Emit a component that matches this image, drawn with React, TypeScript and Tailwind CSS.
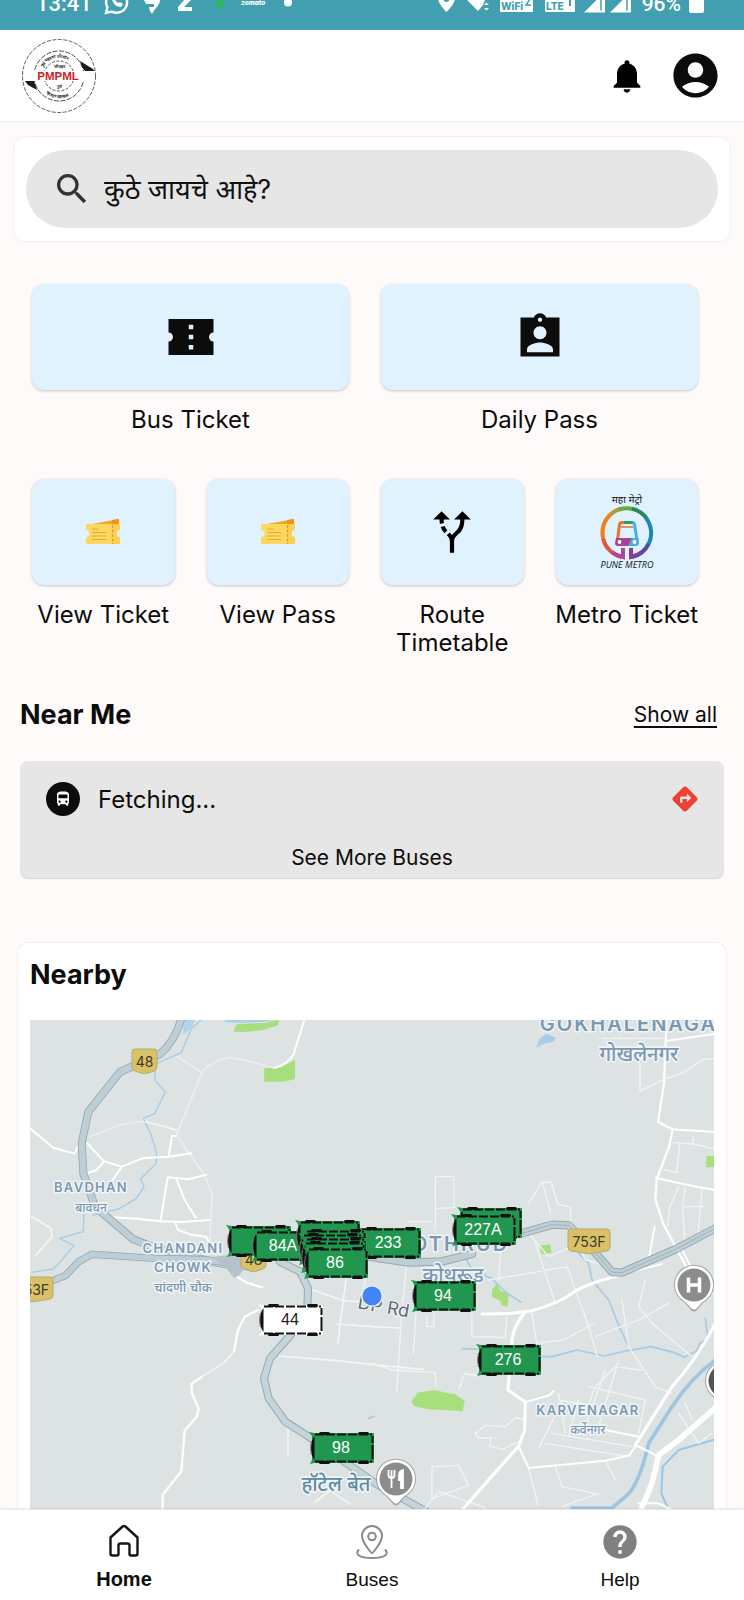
import type { ReactNode } from "react";
import {
  MdAccountCircle,
  MdAltRoute,
  MdDirections,
  MdDirectionsBus,
  MdHelp,
  MdNotifications,
  MdSearch,
} from "react-icons/md";

const MAP_FONT = "Inter, 'Noto Sans', 'Noto Sans Devanagari', sans-serif";

function StatusBar() {
  return (
    <div className="flex h-[30px] items-end justify-between overflow-hidden bg-[#419fb0] pr-[40px] pl-[36px] text-white">
      <div className="flex items-end gap-4">
        <span className="mb-[15px] w-[52px] font-['Roboto',sans-serif] text-[22px] leading-[22px] font-medium">13:41</span>
        <svg viewBox="0 0 190 30" className="h-[30px] w-[190px]" aria-hidden="true">
          <g fill="none" stroke="#fff" strokeWidth="2.4">
            <path d="M2 13 L3.4 7.2 A10.5 10.5 0 1 1 8 11.6 Z" />
          </g>
          <path d="M8 -2c0 5 4 9 9 9l2-3-3-2-2 1-3-3 1-2z" fill="#fff" />
          <path d="M40 0h16c0 5-4 7-8 14-2-3-3-5-3-7h5V4h-8z" fill="#fff" />
          <path d="M75 -4h12v4l-7 7h8v4H74V7l7-8h-6z" fill="#fff" />
          <rect x="112" y="-4" width="8" height="12" rx="1" fill="#2fb56a" />
          <text x="137" y="5" fill="#fff" fontSize="6.5" fontWeight="800" fontStyle="italic" fontFamily="Inter, sans-serif">zomato</text>
          <circle cx="184" cy="2.500" r="4" fill="#fff" />
        </svg>
      </div>
      <div className="flex items-end gap-2">
        <svg viewBox="0 0 198 30" className="h-[30px] w-[198px]" aria-hidden="true">
          <path d="M2 -2a8.500 8.500 0 0 1 17 0c0 6-8.500 14-8.500 14S2 4 2 -2z" fill="#fff" />
          <circle cx="10.500" cy="-1" r="3" fill="#419fb0" />
          <path d="M31 0h18l-2 5-5 6z" fill="#fff" />
          <path d="M48 5l2.500-2.500L53 5zM48 8l2.500 2.500L53 8z" fill="#fff" />
          <rect x="64" y="-6" width="33" height="18" rx="1" fill="#fff" />
          <text x="65" y="10" fill="#419fb0" fontSize="10" fontWeight="800" fontFamily="Inter, sans-serif">WiFi</text>
          <path d="M90 -1h4l-4 6h5" fill="none" stroke="#419fb0" strokeWidth="1.500" />
          <rect x="109" y="-6" width="30" height="18" rx="1" fill="#fff" />
          <text x="110" y="10" fill="#419fb0" fontSize="10" fontWeight="800" fontFamily="Inter, sans-serif">LTE</text>
          <path d="M134 -1v7" stroke="#419fb0" strokeWidth="2" />
          <path d="M148 12.500l21-21v21zM174 12.500l21-21v21z" fill="#fff" />
          <path d="M165 0v10.500M191 0v10.500" stroke="#419fb0" strokeWidth="1.500" />
        </svg>
        <span className="mb-[15px] font-['Roboto',sans-serif] text-[21px] leading-[22px] font-medium">96%</span>
        <svg viewBox="0 0 15 30" className="h-[30px] w-[15px]" aria-hidden="true">
          <rect y="-8" width="15" height="21" rx="2" fill="#fff" />
        </svg>
      </div>
    </div>
  );
}

function Logo() {
  return (
    <svg viewBox="0 0 76 76" className="size-[76px]" role="img" aria-label="PMPML">
      <defs>
        <path id="seal-top" d="M19.500 38a18.500 18.500 0 0 1 37 0" />
        <path id="seal-bottom" d="M16 38a22 22 0 0 0 44 0" />
      </defs>
      <g fill="none" stroke="#333">
        <circle cx="38" cy="38" r="36.500" strokeWidth=".8" strokeDasharray="4 1.500" />
        <circle cx="38" cy="38" r="25" strokeWidth=".9" strokeDasharray="5 1.500" />
        <circle cx="38" cy="38" r="15" strokeWidth=".8" strokeDasharray="3 1.500" />
      </g>
      <g fill="#222" fontFamily="Inter, sans-serif" fontSize="4" fontWeight="600">
        <text><textPath href="#seal-top" startOffset="9">पुणे महानगर परिवहन</textPath></text>
        <text><textPath href="#seal-bottom" startOffset="20">परिवहन महामंडळ</textPath></text>
        <text x="38" y="30" textAnchor="middle">परिवहन</text>
        <text x="38" y="50" textAnchor="middle">पुणे</text>
      </g>
      <rect x="3" y="33" width="71" height="10" fill="#fff" />
      <path d="M59 23l13 8 1.500 2H64l-3-4zM4 43h9l3 9-9-5z" fill="#1b1b1b" />
      <text x="37" y="42" textAnchor="middle" fill="#cf1f2c" fontSize="11.500" fontWeight="700" fontFamily="'Liberation Sans', sans-serif" textRendering="geometricPrecision">PMPML</text>
    </svg>
  );
}

function TicketSharp() {
  return (
    <svg viewBox="0 0 24 24" className="size-[54px]" fill="#0c0c0c" aria-hidden="true">
      <path d="M22 10V4H2v6c1.100 0 2 .9 2 2s-.9 2-2 2v6h20v-6c-1.100 0-2-.9-2-2s.9-2 2-2zm-9 7.500h-2v-2h2zm0-4.500h-2v-2h2zm0-4.500h-2v-2h2z" />
    </svg>
  );
}

function PassSharp() {
  return (
    <svg viewBox="0 0 24 24" className="size-[52px]" fill="#0c0c0c" aria-hidden="true">
      <path d="M21 3h-6.180C14.400 1.840 13.300 1 12 1s-2.400.84-2.820 2H3v18h18V3zm-9 0c.55 0 1 .45 1 1s-.45 1-1 1-1-.45-1-1 .45-1 1-1zm0 4c1.660 0 3 1.340 3 3s-1.340 3-3 3-3-1.340-3-3 1.340-3 3-3zm6 12H6v-1.400c0-2 4-3.100 6-3.100s6 1.100 6 3.100V19z" />
    </svg>
  );
}

function YellowTicket() {
  return (
    <svg viewBox="0 0 36 26" className="h-[26px] w-[36px]" aria-hidden="true">
      <path d="M2 6L34 0v6z" fill="#f5a623" />
      <path d="M27 1l7-1v5h-7z" fill="#eb9420" />
      <path d="M1 5h34v6a3.500 3.500 0 0 0 0 7v7H1v-7a3.500 3.500 0 0 0 0-7z" fill="#fdd85d" />
      <path d="M28 5h7v6a3.500 3.500 0 0 0 0 7v7h-7z" fill="#fccf50" />
      <path d="M27.500 6v19" stroke="#d79a35" strokeWidth="1.200" strokeDasharray="3 1.500" />
      <path d="M7 10h7M7 13.500h14M7 17h14M7 20.500h14" stroke="#e0ab45" strokeWidth="1.200" />
    </svg>
  );
}

function MetroLogo() {
  return (
    <svg viewBox="0 0 60 78" className="h-[78px] w-[60px]" role="img" aria-label="Pune Metro">
      <text x="30" y="10" textAnchor="middle" fontSize="10" fontStyle="italic" fontFamily={MAP_FONT} fill="#111">महा मेट्रो</text>
      <g fill="none" strokeWidth="4">
        <path d="M25 64A24.500 24.500 0 0 1 6 45" stroke="#e0573e" />
        <path d="M6 45A24.500 24.500 0 0 1 14 21" stroke="#f0811f" />
        <path d="M14 21A24.500 24.500 0 0 1 23 16" stroke="#b8963a" />
        <path d="M22 16.500A24.500 24.500 0 0 1 36 16" stroke="#62ab3c" />
        <path d="M35 15.800A24.500 24.500 0 0 1 50 26" stroke="#23895b" />
        <path d="M49 25A24.500 24.500 0 0 1 51 52" stroke="#1b84b8" />
        <path d="M51.500 51A24.500 24.500 0 0 1 35 64" stroke="#5a4a9c" />
        <path d="M15 59A24.500 24.500 0 0 0 26 64V55" stroke="#b0449a" />
        <path d="M45 59A24.500 24.500 0 0 1 34 64V55" stroke="#7d3f98" />
      </g>
      <path d="M20.500 47L22.500 31.500q.3-2 2.500-2h11" fill="none" stroke="#f0702f" strokeWidth="3" strokeLinejoin="round" />
      <path d="M27 28h9v3h-9z" fill="#2f9a5b" />
      <path d="M24 34h12" stroke="#f0702f" strokeWidth="1.500" />
      <path d="M35.500 29.500q1.500 0 2 2L40 47" fill="none" stroke="#48afe0" strokeWidth="3" />
      <path d="M19 45h20v5a3 3 0 0 1-3 3H21a3 3 0 0 1-3-3z" fill="#a8439a" />
      <path d="M35 45h6.500l.5 5a3 3 0 0 1-3 3h-8z" fill="#48afe0" />
      <circle cx="22.500" cy="49" r="1.900" fill="#fff" />
      <circle cx="37.500" cy="49" r="1.900" fill="#fff" />
      <text x="30" y="75" textAnchor="middle" fontSize="9" fontStyle="italic" fontWeight="500" fontFamily="'Open Sans', sans-serif" fill="#111">PUNE METRO</text>
    </svg>
  );
}

function Tile({ label, wide, children }: { label: string; wide?: boolean; children: ReactNode }) {
  return (
    <a
      href="#"
      className={
        wide
          ? "col-span-2 flex flex-col items-center gap-4"
          : "flex flex-col items-center gap-4"
      }
    >
      <span className="flex h-[106px] w-full items-center justify-center rounded-xl bg-[#dff2fe] shadow-[0_1px_3px_rgba(0,0,0,0.22)]">
        {children}
      </span>
      <span className="-mx-2 text-center text-[24px] leading-7">{label}</span>
    </a>
  );
}

function BusMarker({ x, y, label, plain }: { x: number; y: number; label?: string; plain?: boolean }) {
  const body = plain ? "#ffffff" : "#21964f";
  return (
    <g transform={`translate(${x} ${y})`}>
      <path d="M0 0l5 1h59q1 0 1 1v28q0 1-1 1H5l-4 1 2-4V4z" fill={body} />
      <g fill="#111">
        <rect x="10" y="0" width="11" height="3" rx="1.500" />
        <rect x="49" y="0" width="11" height="3" rx="1.500" />
        <rect x="10" y="29" width="11" height="3" rx="1.500" />
        <rect x="49" y="29" width="11" height="3" rx="1.500" />
      </g>
      <path d="M6 2.500h57M6 29.500h57" stroke="#111" strokeWidth="1.800" strokeDasharray="9 2" />
      <path d="M63.500 4v7M63.500 13v14" stroke="#111" strokeWidth="2" />
      <path d="M5.500 4c-5 6-5 18 0 24z" fill="#111" />
      <path d="M2.500 9c-1 5-1 9 0 14" fill="none" stroke="#777" strokeWidth="1" />
      {label && (
        <text x="32" y="21" textAnchor="middle" fontSize="16" fill={plain ? "#222" : "#fff"} fontFamily="'Liberation Sans', sans-serif">
          {label}
        </text>
      )}
    </g>
  );
}

function Shield({ x, y, w, label }: { x: number; y: number; w: number; label: string }) {
  return (
    <g transform={`translate(${x} ${y})`}>
      <path d={`M3 0H${w - 3}Q${w} 0 ${w} 3V18Q${w} 21 ${w - 3} 22L${w / 2 + 2} 24.500Q${w / 2} 25 ${w / 2 - 2} 24.500L3 22Q0 21 0 18V3Q0 0 3 0z`} fill="#d9c266" stroke="#b5a878" strokeWidth="1" />
      <text x={w / 2} y="17.500" textAnchor="middle" fontSize="14" fill="#3b3a2e" fontFamily="Inter, sans-serif">{label}</text>
    </g>
  );
}

function Place({ x, y, size, spaced, color, children }: { x: number; y: number; size: number; spaced?: boolean; color?: string; children: string }) {
  return (
    <text
      x={x}
      y={y}
      textAnchor="middle"
      fontSize={size}
      fontWeight={spaced ? 600 : 500}
      fontFamily={MAP_FONT}
      className={spaced ? "tracking-widest" : undefined}
      fill={color ?? "#7b98b3"}
      stroke="#f1f5f7"
      strokeWidth="3"
      strokeLinejoin="round"
      paintOrder="stroke"
    >
      {children}
    </text>
  );
}

function Pin({ x, y, dark, children }: { x: number; y: number; dark?: boolean; children?: ReactNode }) {
  return (
    <g transform={`translate(${x} ${y})`}>
      <path d="M0 26.500c-3 0-5-5-10-9.500a20 20 0 1 1 20 0c-5 4.500-7 9.500-10 9.500z" fill="#777" opacity=".55" />
      <path d="M0 24.500c-3 0-5-5-10-8.500a19 19 0 1 1 20 0c-5 3.500-7 8.500-10 8.500z" fill="#fff" />
      <circle r="16.500" fill={dark ? "#555" : "#8c8c8c"} />
      {children}
    </g>
  );
}

function CityMap() {
  return (
    <svg viewBox="30 1020 684 489" preserveAspectRatio="xMidYMin slice" className="block h-[489px] w-full" role="img" aria-label="Map of nearby buses">
      <rect x="-600" y="1020" width="2000" height="490" fill="#dde2e3" />

      <g transform="translate(0 1000) scale(.33333)" fill="none" strokeLinejoin="round" strokeLinecap="round">
        <path d="M700 95l10-22 90-5 37-10-2 18-45 14-60 6zM793 205l50-3 42-22v57l-35 8h-58z" fill="#a8df7d" />
        <path d="M678 62l50 3 70-4 22-6" stroke="#a8cfe8" strokeWidth="8" />
        <path d="M916 50L880 165Q860 195 822 204" stroke="#fff" strokeWidth="6" />
        <path d="M822 204Q740 180 690 173Q640 180 608 214L556 340 530 400 560 450 610 520 636 580 630 720M530 168l72 48M270 410l90-35 70-12" stroke="#eaeeef" strokeWidth="5" />
        <path d="M608 56l-34 30-30 72-80 35 2 48 30 36-12 24-20 40-34 14 22 46 18 60-2 30-46 45 10 25-24 35-50 30-80 20" stroke="#a5cce6" strokeWidth="4" />
        <path d="M550 60h35l-10 25-25 18z" fill="#b2d4e8" />
        <path d="M252 635l-2 60-72 20 44 22-34 40-28 30-65 10" stroke="#a5cce6" strokeWidth="4" />
        <path d="M90 385l70 58 64 18 14-30M262 430l50 54 54 16 64-26 76-4 68-10M312 484l-22 26-24 8M366 500l-28 40M506 470l10-62h12M340 652l70 4 70 8 70 2 76-6M482 660l18-110 4-18 60 6 55-14M530 540l24 60 34 54M524 665l10 25 40 14 44 6 14 22" stroke="#fff" strokeWidth="6" />
        <path d="M436 366l52 12 40 12" stroke="#f5f7f7" strokeWidth="5" />
        <path d="M95 650l60 36M108 766l48-56-4-24" stroke="#f5f7f7" strokeWidth="5" />
        <path d="M548 40Q530 120 480 162L360 216 265 335 245 430 250 520 285 620 400 718 470 745 660 790 720 800" stroke="#98a8b2" strokeWidth="24" />
        <path d="M548 40Q530 120 480 162L360 216 265 335 245 430 250 520 285 620 400 718 470 745 660 790 720 800" stroke="#bdced4" strokeWidth="19" />
        <path d="M150 845l46-18 40-42 40-22 190 12 150 4 140 20" stroke="#98a8b2" strokeWidth="22" />
        <path d="M150 845l46-18 40-42 40-22 190 12 150 4 140 20" stroke="#bdced4" strokeWidth="17" />
      </g>

      <g transform="translate(0 1200) scale(.33333)" fill="none" strokeLinejoin="round" strokeLinecap="round">
        <path d="M640 170l80-8 30 20-32 44-16 8-20-26z" fill="#b4c3cb" />
        <path d="M840 185l60 30 24 50-2 60-50 80-62 70-18 60 14 60 50 70 70 45 100 70 100 70 180 100" stroke="#98a8b2" strokeWidth="24" />
        <path d="M840 185l60 30 24 50-2 60-50 80-62 70-18 60 14 60 50 70 70 45 100 70 100 70 180 100" stroke="#c3d5d9" strokeWidth="18" />
        <path d="M714 232l26 16 46 14M774 330l-40 20-20 40-12 64M604 532l-30 20 2 28 20 46-6 24-36 42-10 122-56 70v60" stroke="#fff" strokeWidth="7" />
        <path d="M702 454l-30 34-66 42M940 270l90 32 90 6M1038 240l-16 120-8 70M1010 372l110 8 80 4M840 468l170 14 110 12 150 14M864 690v76M946 906l44-34 60 40" stroke="#f3f6f6" strokeWidth="5" />
        <path d="M1106 655l16-6" stroke="#a5cce6" strokeWidth="6" />
      </g>

      <g transform="translate(372 1000) scale(.33333)" fill="none" strokeLinejoin="round" strokeLinecap="round">
        <path d="M492 143l10-26 20-16 30 12-8 12-28 6z" fill="#a6cdea" />
        <path d="M884 60l-8 190-18 116 44 22-10 50-38 100-4 60 24 74 70 130" stroke="#fff" strokeWidth="7" />
        <path d="M886 122l140-20M902 388l126 8M852 534l110 24 66 12" stroke="#fff" strokeWidth="6" />
        <path d="M690 115h190M804 190v84l70-36 60-20 60-40 30-2M190 690v-160h56v90M110 665h70M190 690v-64l60-4M470 610l40-64h28l18 66 40 10v40M510 546l26 90M904 428l60 4 60 14M924 428l-10 90-38-10M964 410v22M940 560l-8 60 6 100M920 560l-26 60-8 60M990 565l-12 140M938 620h60" stroke="#f1f4f4" strokeWidth="4" />
        <path d="M1004 468h26v34h-28zM502 738l32-6 5 26-30 5z" fill="#a8df7d" />
      </g>

      <g transform="translate(372 1200) scale(.33333)" fill="none" strokeLinejoin="round" strokeLinecap="round">
        <path d="M360 270l14-20 12 22 24 10-4 38-18-4-2-12-26-14zM118 604l20-26 50-8 40 10 20 2 30 20-6 32-46-3-60-3-40-10z" fill="#a8df7d" />
        <path d="M280 172l20 38 60 26 40 40 46 30M620 160l30 30 10 50 50 60 22 56 20 46 14 30M270 446l100 4 100 20h70l76-20 80 18 70-16 72-12 70 18 30 14 36-20 10-22 24-14-8-60" stroke="#a5cce6" strokeWidth="5" />
        <path d="M1030 480Q960 530 900 620L830 730Q800 860 760 890L720 924H600" stroke="#9cc6e4" strokeWidth="11" />
        <path d="M1030 718L920 750 872 800 868 880 890 930" stroke="#9cc6e4" strokeWidth="6" />
        <path d="M-30 280l10-40M104 190l-14 140-16 244M0 490l60 20 130 8 2 40M260 570l18-50 40 8M132 340l-8 120M164 350v30h22v-40M300 340v70l100 2 4-60M350 240l236-40 20 60 30 80 20 60 20 70M490 130l40 120 20 60M390 110l-10 130M470 100l60 70 70-30M600 100l40 80 80 20M480 340l14 90 80-10 94-50M670 410l130-50 90-50M820 240l-20 80 40 50 120 100M750 300l20 140 80 120 50 20M640 640l30-80 60-60 80 10M560 600l240 40M540 700l240 40M650 560l170 40-20 100M700 510l-60 170M740 480l-60 200M560 580l20 120M620 600l-30 110M310 700l30-24 60 4 30-26 30 4M310 700l10 14h38l-6 24 40 10 40-20M500 745l50-100M520 730l250 40M470 805l28 110M550 800l20 60 100 20M180 800l80-4 30 60-110 40zM160 924l40-50 140 50M570 920l110-40M700 780l30 60M920 640l60 90 40-30M940 610l20 50" stroke="#f1f4f4" strokeWidth="4" />
        <path d="M330 342l90-2 60-8Q560 310 600 280T760 222" stroke="#fff" strokeWidth="9" />
        <path d="M456 340Q425 380 420 420L408 570 460 606 458 690 440 738 270 930" stroke="#fff" strokeWidth="10" />
        <path d="M1030 370Q980 470 900 560L790 735 854 766M462 606l70-20 14-14M440 740l30 64 230-22 72-16 20-30M700 690l100 20M800 910h60l40 20M750 222l120-30M848 80L830 180M926 140l30 60" stroke="#fff" strokeWidth="6" />
        <path d="M1030 370Q980 470 900 560L790 735" stroke="#fff" strokeWidth="9" />
        <path d="M1034 620L920 720 860 765 840 850 806 930" stroke="#fff" strokeWidth="17" />
        <path d="M-10 170l120 18 100-4 90-22M450 100l90-26 50 2 60 60 70 80 30 2 160-70 130-68" stroke="#98a8b2" strokeWidth="25" />
        <path d="M-10 170l120 18 100-4 90-22M450 100l90-26 50 2 60 60 70 80 30 2 160-70 130-68" stroke="#bdced4" strokeWidth="19" />
        <path d="M450 100l90-26 50 2 60 60 70 80 30 2 160-70 130-68" stroke="#a2b1ba" strokeWidth="3" />
      </g>

      <Place x={91} y={1192} size={13} spaced>BAVDHAN</Place>
      <Place x={91} y={1212} size={12}>बावधन</Place>
      <Place x={183} y={1253} size={13} spaced>CHANDANI</Place>
      <Place x={183} y={1272} size={13} spaced>CHOWK</Place>
      <Place x={183} y={1292} size={13}>चांदणी चौक</Place>
      <Place x={636} y={1031} size={20} spaced>GOKHALENAGAR</Place>
      <Place x={639} y={1061} size={20}>गोखलेनगर</Place>
      <Place x={453} y={1251} size={20} spaced>KOTHRUD</Place>
      <Place x={453} y={1282} size={20}>कोथरूड</Place>
      <Place x={588} y={1415} size={13} spaced>KARVENAGAR</Place>
      <Place x={588} y={1434} size={12}>कर्वेनगर</Place>
      <Place x={336} y={1491} size={20} color="#5f8ba0">हॉटेल बेत</Place>
      <text transform="rotate(10 384 1305)" x="384" y="1313" textAnchor="middle" fontSize="18" fill="#5d6b75" stroke="#f1f5f7" strokeWidth="2" paintOrder="stroke" fontFamily={MAP_FONT}>DP Rd</text>

      <Shield x={132} y={1049} w={25} label="48" />
      <Shield x={568} y={1229} w={42} label="753F" />
      <Shield x={12} y={1277} w={41} label="753F" />
      <Shield x={241} y={1247} w={25} label="48" />

      <Pin x={694} y={1285}>
        <path d="M-5.500-7.500v15M5.500-7.500v15M-5.500 0h11" stroke="#fff" strokeWidth="3.500" />
      </Pin>
      <Pin x={396} y={1479}>
        <path d="M-7.500-9v5q0 3 3 3v10M-4.500-9v7M-1.500-9v5q0 3-3 3M3-4q0-4 4-5v18H5V1H3z" fill="none" stroke="#fff" strokeWidth="1.800" />
        <path d="M3-4q0-4 4-5v18H5V1H3z" fill="#fff" />
      </Pin>
      <Pin x={725} y={1381} dark />

      <BusMarker x={226} y={1225} />
      <BusMarker x={251} y={1230} label="84A" />
      <BusMarker x={356} y={1227} label="233" />
      <BusMarker x={295} y={1220} />
      <BusMarker x={301} y={1229} />
      <BusMarker x={298} y={1233} />
      <BusMarker x={301} y={1237} />
      <BusMarker x={300} y={1241} />
      <BusMarker x={303} y={1247} label="86" />
      <BusMarker x={457} y={1207} />
      <BusMarker x={451} y={1214} label="227A" />
      <BusMarker x={411} y={1280} label="94" />
      <BusMarker x={476} y={1344} label="276" />
      <BusMarker x={309} y={1432} label="98" />
      <BusMarker x={258} y={1304} label="44" plain />
      <circle cx="372" cy="1296" r="11" fill="#e6edfa" />
      <circle cx="372" cy="1296" r="9.500" fill="#4285f4" />
    </svg>
  );
}

function BottomNav() {
  return (
    <nav className="mt-auto grid h-[90px] grid-cols-3 bg-white pt-3 font-['Liberation_Sans',sans-serif] text-[19px] leading-6 shadow-[0_-1px_3px_rgba(0,0,0,0.12)]">
      <a href="#" aria-current="page" className="flex flex-col items-center gap-[5px] text-[20px] font-bold">
        <svg viewBox="0 0 40 40" className="size-[40px]" fill="none" stroke="#161616" strokeWidth="2.400" strokeLinejoin="round" aria-hidden="true">
          <path d="M6.500 15.500L18.600 4.500q1.400-1.200 2.800 0L33.500 15.500V31.500a2 2 0 0 1-2 2H27a1.500 1.500 0 0 1-1.500-1.500V23.500a2 2 0 0 0-2-2h-7a2 2 0 0 0-2 2V32A1.500 1.500 0 0 1 13 33.500H8.500a2 2 0 0 1-2-2z" />
        </svg>
        Home
      </a>
      <a href="#" className="flex flex-col items-center gap-[6px]">
        <svg viewBox="0 0 40 40" className="size-[40px]" fill="none" stroke="#8a8a8a" strokeWidth="2" strokeLinecap="round" aria-hidden="true">
          <path d="M20 31c-1 0-10-11-10-17a10 10 0 0 1 20 0c0 6-9 17-10 17z" />
          <circle cx="20" cy="14.500" r="3.800" />
          <path d="M6.500 28c-3.500 4 0 8 13.500 8s17-4 13.500-8" />
        </svg>
        Buses
      </a>
      <a href="#" className="flex flex-col items-center gap-[6px]">
        <MdHelp className="size-[40px] text-[#808080]" aria-hidden="true" />
        Help
      </a>
    </nav>
  );
}

export default function App() {
  return (
    <div className="flex min-h-screen flex-col bg-[#fefaf9] font-['Inter','Noto_Sans',sans-serif] text-[#0c0c0c]">
      <StatusBar />
      <header className="flex h-[92px] items-center justify-between border-b border-[#ededed] bg-white pr-[22px] pl-[21px]">
        <Logo />
        <div className="flex items-center gap-[22px]">
          <button type="button" aria-label="Notifications">
            <MdNotifications className="size-10 text-black" />
          </button>
          <button type="button" aria-label="Account">
            <MdAccountCircle className="size-[53px]" />
          </button>
        </div>
      </header>

      <main>
        <form className="mx-[13px] mt-[14px] rounded-xl border border-[#f1efef] bg-white px-3 py-[13px]">
          <label className="flex h-[78px] items-center gap-3 rounded-full bg-[#e6e6e6] px-[26px]">
            <MdSearch className="size-10 shrink-0 text-[#333]" aria-hidden="true" />
            <input
              type="search"
              aria-label="कुठे जायचे आहे?"
              placeholder="कुठे जायचे आहे?"
              className="h-12 min-w-0 flex-1 bg-transparent text-[27px] outline-none placeholder:text-[#111]"
            />
          </label>
        </form>

        <section className="mt-[42px] grid grid-cols-4 gap-x-8 gap-y-[45px] pr-[46px] pl-8">
          <Tile label="Bus Ticket" wide><TicketSharp /></Tile>
          <Tile label="Daily Pass" wide><PassSharp /></Tile>
          <Tile label="View Ticket"><YellowTicket /></Tile>
          <Tile label="View Pass"><YellowTicket /></Tile>
          <Tile label="Route Timetable"><MdAltRoute className="size-[50px] text-black" /></Tile>
          <Tile label="Metro Ticket"><MetroLogo /></Tile>
        </section>

        <section className="mt-[42px] px-5">
          <div className="flex items-center justify-between pr-[7px]">
            <h2 className="text-[27px] leading-8 font-bold">Near Me</h2>
            <a href="#" className="text-[21px] leading-8 underline underline-offset-4">Show all</a>
          </div>
          <div className="mt-[30px] rounded-lg bg-[#e6e6e6] pt-4 pb-[6px] shadow-[0_1px_1px_rgba(0,0,0,0.15)]">
            <div className="flex h-[43px] items-center pr-[24px] pl-[26px]">
              <span className="flex size-[34px] items-center justify-center rounded-full bg-[#0c0c0c]">
                <MdDirectionsBus className="size-[18px] text-white" aria-hidden="true" />
              </span>
              <span className="ml-[18px] flex-1 pt-[2px] text-[24px] leading-7">Fetching...</span>
              <button type="button" aria-label="Directions">
                <MdDirections className="size-[30px] text-[#ee4035]" />
              </button>
            </div>
            <button type="button" className="mt-6 block w-full text-center text-[21px] leading-7">See More Buses</button>
          </div>
        </section>

        <section className="mx-[17px] mt-16 rounded-t-xl border border-b-0 border-[#f1efef] bg-white px-3 pt-4">
          <h2 className="text-[27px] leading-8 font-bold">Nearby</h2>
          <div className="mt-[29px]">
            <CityMap />
          </div>
        </section>
      </main>

      <BottomNav />
    </div>
  );
}
